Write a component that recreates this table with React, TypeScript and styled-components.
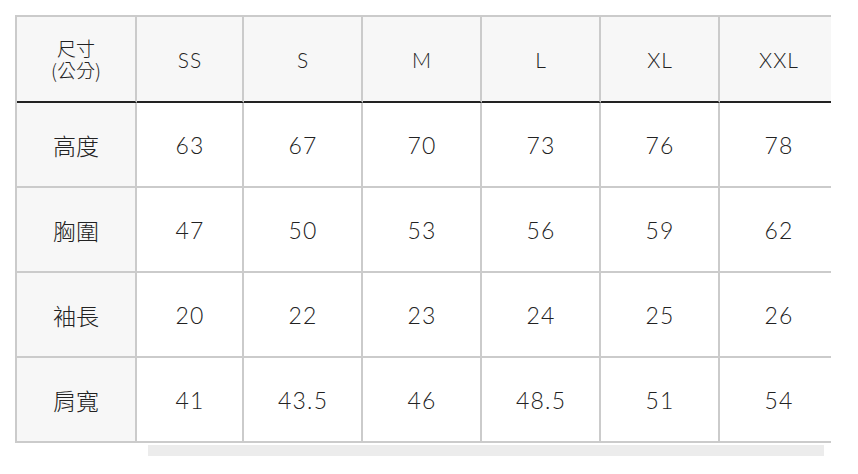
import React from "react";
import styled, { createGlobalStyle } from "styled-components";

const Global = createGlobalStyle`
  html, body { margin: 0; padding: 0; background: #fff; }
  body { font-family: "Lato", "Noto Sans CJK TC", sans-serif; color: #333; }
`;

const Page = styled.div`
  padding: 15px 0 0 15px;
`;

const Scroller = styled.div`
  width: 816px;
  overflow: hidden;
`;

const Table = styled.table`
  border-spacing: 0;
  table-layout: fixed;
  width: 824px;
  border-top: 2px solid #cbcbcb;
  border-left: 2px solid #cbcbcb;
`;

const Cell = styled.td<{ $head?: boolean; $label?: boolean }>`
  box-sizing: border-box;
  height: ${(p) => (p.$head ? 86 : 85)}px;
  padding: 0;
  text-align: center;
  vertical-align: middle;
  border-right: 2px solid #cbcbcb;
  border-bottom: 2px solid ${(p) => (p.$head ? "#222" : "#cbcbcb")};
  background: ${(p) => (p.$head || p.$label ? "#f7f7f7" : "#fff")};
  font-weight: 300;
  color: #222;
`;

const Num = styled.span<{ $head?: boolean }>`
  font-family: "Lato", sans-serif;
  font-size: ${(p) => (p.$head ? 21 : 23)}px;
  letter-spacing: ${(p) => (p.$head ? 1 : 1.2)}px;
  margin-right: ${(p) => (p.$head ? -1 : -1.2)}px;
  font-weight: 300;
  color: #222;
`;

const Label = styled.span`
  font-family: "Noto Sans CJK TC", sans-serif;
  font-size: 23px;
  font-weight: 300;
  color: #222;
`;

const Corner = styled.span`
  display: inline-block;
  font-family: "Noto Sans CJK TC", sans-serif;
  font-size: 19px;
  line-height: 22px;
  font-weight: 300;
  color: #222;
`;

const Thumb = styled.div`
  margin: 2px 0 0 133px;
  width: 676px;
  height: 11px;
  background: #ececec;
`;

const widths = [120, 107, 119, 119, 119, 119, 119];
const sizes = ["SS", "S", "M", "L", "XL", "XXL"];
const rows: [string, string[]][] = [
  ["高度", ["63", "67", "70", "73", "76", "78"]],
  ["胸圍", ["47", "50", "53", "56", "59", "62"]],
  ["袖長", ["20", "22", "23", "24", "25", "26"]],
  ["肩寬", ["41", "43.5", "46", "48.5", "51", "54"]],
];

export default function App() {
  return (
    <>
      <Global />
      <Page>
        <Scroller>
          <Table>
            <colgroup>
              {widths.map((w, i) => (
                <col key={i} style={{ width: w }} />
              ))}
            </colgroup>
            <thead>
              <tr>
                <Cell as="th" $head $label>
                  <Corner>
                    尺寸
                    <br />
                    (公分)
                  </Corner>
                </Cell>
                {sizes.map((s) => (
                  <Cell as="th" $head key={s}>
                    <Num $head>{s}</Num>
                  </Cell>
                ))}
              </tr>
            </thead>
            <tbody>
              {rows.map(([label, vals]) => (
                <tr key={label}>
                  <Cell $label>
                    <Label>{label}</Label>
                  </Cell>
                  {vals.map((v, i) => (
                    <Cell key={i}>
                      <Num>{v}</Num>
                    </Cell>
                  ))}
                </tr>
              ))}
            </tbody>
          </Table>
        </Scroller>
        <Thumb />
      </Page>
    </>
  );
}
